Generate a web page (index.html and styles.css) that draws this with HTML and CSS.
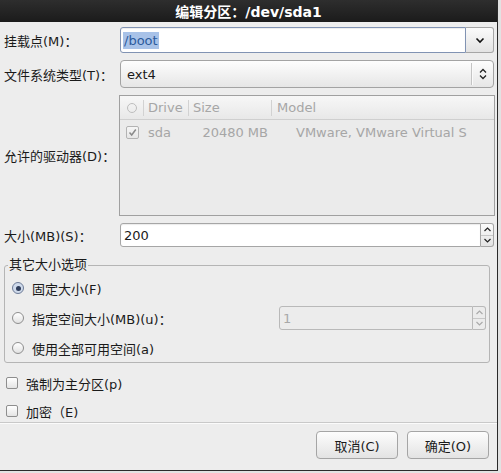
FILE: index.html
```html
<!DOCTYPE html>
<html lang="zh-CN">
<head>
<meta charset="utf-8">
<title>编辑分区</title>
<link rel="stylesheet" href="styles.css">
</head>
<body>
<div class="dialog">
  <div class="titlebar"><span class="title">编辑分区<span class="colon">：</span>/dev/sda1</span></div>
  <div class="content">
    <div class="form">
      <div class="lbl">挂载点(M)<span class="colon">：</span></div>
      <div class="ctl combo-entry">
        <div class="entry focus"><span class="sel">/boot</span></div>
        <div class="dropbtn"><svg width="12" height="12" viewBox="0 0 12 12"><path d="M2.5 4.5 L6 8 L9.5 4.5" fill="none" stroke="#111" stroke-width="1.6"/></svg></div>
      </div>

      <div class="lbl">文件系统类型(T)<span class="colon">：</span></div>
      <div class="ctl combo">
        <span class="combo-text">ext4</span>
        <span class="combo-sep"></span>
        <span class="combo-icon"><svg width="10" height="14" viewBox="0 0 10 14"><path d="M2 5.5 L5 2.5 L8 5.5 M2 8.5 L5 11.5 L8 8.5" fill="none" stroke="#222" stroke-width="1.3"/></svg></span>
      </div>

      <div class="lbl">允许的驱动器(D)<span class="colon">：</span></div>
      <div class="ctl list">
        <div class="list-head">
          <div class="cell c0"><span class="hradio"></span></div>
          <div class="cell c1">Drive</div>
          <div class="cell c2">Size</div>
          <div class="cell c3">Model</div>
        </div>
        <div class="list-row">
          <div class="cell c0"><span class="rcheck"><svg width="9" height="9" viewBox="0 0 9 9"><path d="M1.5 4.5 L3.7 7 L7.8 1.5" fill="none" stroke="#8a8a8a" stroke-width="1.5"/></svg></span></div>
          <div class="cell c1">sda</div>
          <div class="cell c2 right">20480 MB</div>
          <div class="cell c3 model">VMware, VMware Virtual S</div>
        </div>
      </div>

      <div class="lbl">大小(MB)(S)<span class="colon">：</span></div>
      <div class="ctl spin">
        <div class="spin-entry">200</div>
        <div class="spin-btns">
          <span class="sb"><svg width="9" height="7" viewBox="0 0 9 7"><path d="M1.5 5 L4.5 2 L7.5 5" fill="none" stroke="#222" stroke-width="1.2"/></svg></span>
          <span class="sb"><svg width="9" height="7" viewBox="0 0 9 7"><path d="M1.5 2 L4.5 5 L7.5 2" fill="none" stroke="#222" stroke-width="1.2"/></svg></span>
        </div>
      </div>
    </div>

    <fieldset class="frame">
      <legend>其它大小选项</legend>
      <div class="opt first"><span class="radio on"></span><span>固定大小(F)</span></div>
      <div class="opt"><span class="radio"></span><span>指定空间大小(MB)(u)<span class="colon">：</span></span>
        <div class="spin small disabled">
          <div class="spin-entry">1</div>
          <div class="spin-btns">
            <span class="sb"><svg width="9" height="7" viewBox="0 0 9 7"><path d="M1.5 5 L4.5 2 L7.5 5" fill="none" stroke="#aaa" stroke-width="1.2"/></svg></span>
            <span class="sb"><svg width="9" height="7" viewBox="0 0 9 7"><path d="M1.5 2 L4.5 5 L7.5 2" fill="none" stroke="#aaa" stroke-width="1.2"/></svg></span>
          </div>
        </div>
      </div>
      <div class="opt"><span class="radio"></span><span>使用全部可用空间(a)</span></div>
    </fieldset>

    <div class="checks">
      <div class="check first"><span class="box"></span><span>強制为主分区(p)</span></div>
      <div class="check"><span class="box"></span><span>加密（E)</span></div>
    </div>

    <div class="sep"></div>

    <div class="buttons">
      <button class="btn">取消(C)</button>
      <button class="btn">确定(O)</button>
    </div>
  </div>
</div>
</body>
</html>
```

FILE: styles.css
```css
* { box-sizing: border-box; }

body {
  margin: 0;
  background: #e2e2e2;
  font-family: "DejaVu Sans", "Noto Sans CJK SC", sans-serif;
  font-size: 13px;
  color: #1a1a1a;
}

.colon {
  font-family: "Noto Sans CJK JP", "Noto Sans CJK SC", sans-serif;
}

.dialog {
  width: 498px;
  height: 471px;
  border-right: 1px solid #2a2a2a;
  border-bottom: 1px solid #2a2a2a;
  background: #ededed;
  display: flex;
  flex-direction: column;
}

.titlebar {
  height: 22px;
  background: linear-gradient(#2e2e2e, #1b1b1b);
  display: flex;
  align-items: center;
  justify-content: center;
}

.title {
  color: #fff;
  font-weight: bold;
  font-size: 14px;
  line-height: 16px;
}

.content {
  flex: 1;
  display: flex;
  flex-direction: column;
}

.form {
  display: grid;
  grid-template-columns: 116px 376px;
  grid-template-rows: 26px 28px 121px 24px;
  row-gap: 7px;
  padding: 5px 0 0 4px;
}

.lbl {
  align-self: center;
  white-space: nowrap;
}

.ctl { display: flex; }

.combo-entry { width: 374px; }

.entry {
  flex: 1;
  height: 26px;
  background: #fff;
  border: 1px solid #a6a6a6;
  border-radius: 3px 0 0 3px;
  display: flex;
  align-items: center;
  padding-left: 2px;
  box-shadow: inset 0 1px 1px rgba(0,0,0,0.08);
}

.entry.focus { border-color: #8193b3; }

.sel {
  background: #a8c2e8;
  color: #2c5a9c;
  line-height: 17px;
  padding: 0 1px;
}

.dropbtn {
  width: 28px;
  height: 26px;
  border: 1px solid #a6a6a6;
  border-left: none;
  border-radius: 0 3px 3px 0;
  background: linear-gradient(#fbfbfb, #e3e3e3);
  display: flex;
  align-items: center;
  justify-content: center;
}

.combo {
  width: 374px;
  height: 28px;
  border: 1px solid #a3a3a3;
  border-radius: 4px;
  background: linear-gradient(#fdfdfd, #e6e6e6);
  align-items: center;
}

.combo-text {
  flex: 1;
  padding-left: 6px;
}

.combo-sep {
  width: 1px;
  height: 22px;
  background: #c4c4c4;
  box-shadow: 1px 0 0 #fafafa;
}

.combo-icon {
  width: 21px;
  display: flex;
  justify-content: center;
  align-items: center;
}

.list {
  margin-left: -1px;
  width: 376px;
  height: 121px;
  border: 1px solid #a0a0a0;
  background: #ebebeb;
  flex-direction: column;
  color: #a6a6a6;
}

.list-head {
  height: 24px;
  background: linear-gradient(#f7f7f7, #e8e8e8);
  border-bottom: 1px solid #cfcfcf;
  display: grid;
  grid-template-columns: 23px 45px 83px 1fr;
  align-items: center;
}

.list-row {
  height: 25px;
  display: grid;
  grid-template-columns: 23px 45px 83px 1fr;
  align-items: center;
}

.cell {
  white-space: nowrap;
  overflow: hidden;
  padding-left: 4px;
  line-height: 16px;
}

.list-head .cell.c1,
.list-head .cell.c2,
.list-head .cell.c3 {
  border-left: 1px solid #d2d2d2;
}

.list-head .c3 { padding-left: 5px; }

.cell.c0 {
  padding-left: 6px;
  display: flex;
  align-items: center;
}

.list-row .c1 { padding-left: 5px; }

.right {
  text-align: right;
  padding-right: 3px;
}

.model { padding-left: 25px; }

.hradio {
  width: 10px;
  height: 10px;
  border: 1px solid #bdbdbd;
  border-radius: 50%;
  margin-left: 1px;
}

.rcheck {
  width: 13px;
  height: 13px;
  border: 1px solid #b3b3b3;
  border-radius: 2px;
  background: linear-gradient(#f6f6f6, #e6e6e6);
  display: flex;
  align-items: center;
  justify-content: center;
}

.spin { width: 374px; height: 24px; display: flex; }

.spin-entry {
  flex: 1;
  background: #fff;
  border: 1px solid #a6a6a6;
  border-radius: 3px 0 0 3px;
  padding-left: 3px;
  display: flex;
  align-items: center;
  box-shadow: inset 0 1px 1px rgba(0,0,0,0.08);
}

.spin-btns {
  width: 13px;
  border: 1px solid #a6a6a6;
  border-left: none;
  border-radius: 0 3px 3px 0;
  background: linear-gradient(#fbfbfb, #e3e3e3);
  display: flex;
  flex-direction: column;
}

.sb {
  flex: 1;
  display: flex;
  align-items: center;
  justify-content: center;
}

.sb + .sb { border-top: 1px solid #c8c8c8; }

.frame {
  margin: 10px 0 0 4px;
  width: 486px;
  border: 1px solid #b5b5b5;
  border-radius: 3px;
  padding: 0 3px 2px 7px;
  min-width: 0;
}

.frame legend {
  padding: 0 1px;
  margin-left: -4px;
  line-height: 16px;
}

.opt {
  height: 24px;
  display: flex;
  align-items: center;
  gap: 8px;
  margin-top: 6px;
}

.opt.first { margin-top: 3px; }

.radio {
  width: 12px;
  height: 12px;
  border: 1px solid #8e8e8e;
  border-radius: 50%;
  background: linear-gradient(#ffffff, #e2e2e2);
  flex: none;
  display: flex;
  align-items: center;
  justify-content: center;
}

.radio.on {
  border-color: #6e7c97;
  background: #cfdaeb;
}

.radio.on::after {
  content: "";
  width: 5px;
  height: 5px;
  border-radius: 50%;
  background: #2f3d5a;
}

.spin.small {
  width: 207px;
  margin-left: auto;
}

.disabled .spin-entry {
  background: #ececec;
  border-color: #b9b9b9;
  color: #a8a8a8;
  box-shadow: none;
}

.disabled .spin-btns {
  border-color: #b9b9b9;
  background: #ececec;
}

.checks { margin-top: 10px; }

.check {
  height: 20px;
  display: flex;
  align-items: center;
  gap: 8px;
  padding-left: 6px;
  margin-top: 8px;
}

.check.first { margin-top: 0; }

.box {
  width: 12px;
  height: 12px;
  border: 1px solid #8e8e8e;
  border-radius: 2px;
  background: linear-gradient(#ffffff, #e4e4e4);
  flex: none;
}

.sep {
  margin-top: 1px;
  height: 2px;
  border-top: 1px solid #c9c9c9;
  border-bottom: 1px solid #fbfbfb;
}

.buttons {
  margin-top: 7px;
  display: flex;
  justify-content: flex-end;
  gap: 9px;
  padding-right: 8px;
}

.btn {
  width: 82px;
  height: 28px;
  border: 1px solid #a5a5a5;
  border-radius: 4px;
  background: linear-gradient(#fdfdfd, #e3e3e3);
  font-family: "DejaVu Sans", "Noto Sans CJK SC", sans-serif;
  font-size: 13px;
  color: #1a1a1a;
  padding: 0;
}
```
